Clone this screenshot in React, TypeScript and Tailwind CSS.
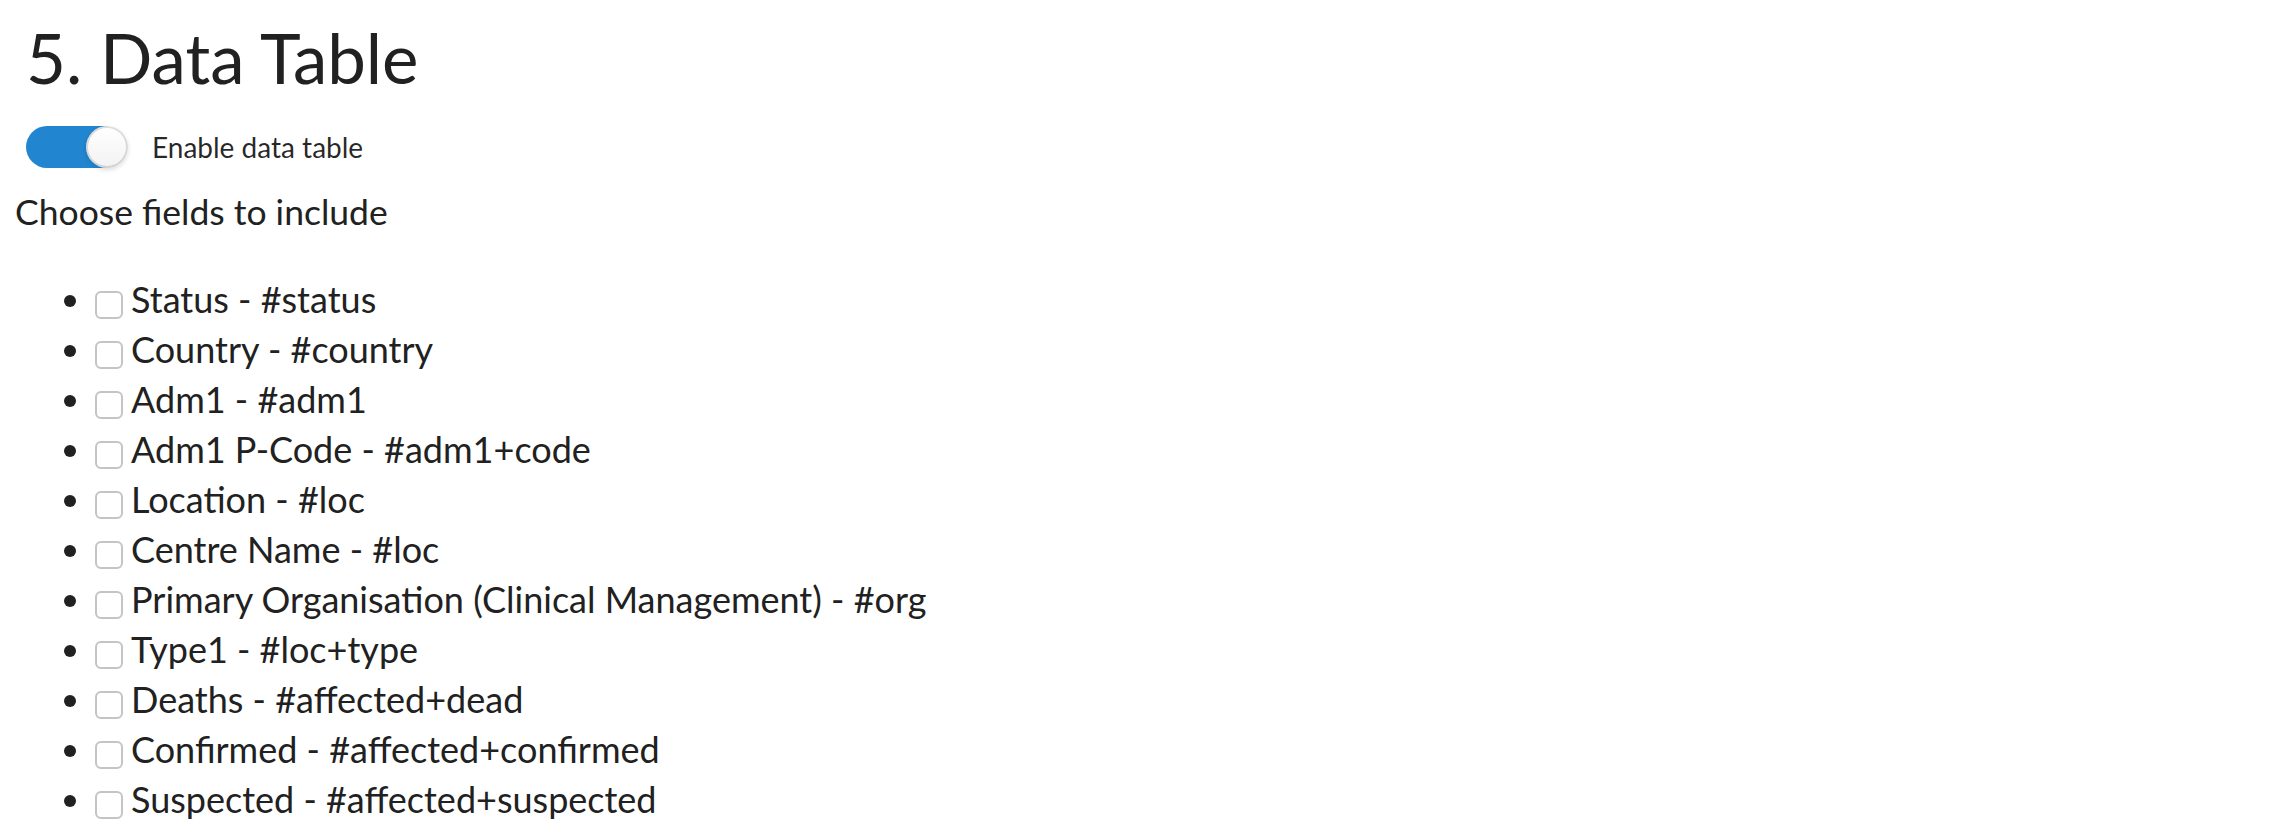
const fields = [
  'Status - #status',
  'Country - #country',
  'Adm1 - #adm1',
  'Adm1 P-Code - #adm1+code',
  'Location - #loc',
  'Centre Name - #loc',
  'Primary Organisation (Clinical Management) - #org',
  'Type1 - #loc+type',
  'Deaths - #affected+dead',
  'Confirmed - #affected+confirmed',
  'Suspected - #affected+suspected',
];

const Toggle = ({ label }: { label: string }) => {
  return (
    <div className="ml-[26px] mt-[26px] flex h-[42px] items-center">
      <div className="relative h-[42px] w-[98px] rounded-full bg-[#2185d0]">
        <span className="absolute top-0 left-[60px] h-[42px] w-[42px] rounded-full bg-white bg-gradient-to-b from-transparent to-black/5 shadow-[0_2px_4px_0_rgba(34,36,38,0.15),inset_0_0_0_2px_rgba(34,36,38,0.15)]" />
      </div>
      <span className="ml-[28px] text-[28px] leading-[42px] text-black/85">{label}</span>
    </div>
  );
};

const FieldItem = ({ title }: { title: string }) => {
  return (
    <li className="h-[50px] leading-[50px]">
      <span className="mr-[8px] inline-block h-[28px] w-[28px] rounded-[6px] border-2 border-[#c4c4c4] bg-white align-[-6px]" />
      {title}
    </li>
  );
};

export default function App() {
  return (
    <div className="min-h-screen bg-white font-['Lato','Liberation_Sans',sans-serif] text-[#212121]">
      <h1 className="pt-[17px] pl-[26px] text-[69px] leading-[1.2] font-normal">5. Data Table</h1>
      <Toggle label="Enable data table" />
      <p className="mt-[23px] pl-[15px] text-[35.5px] leading-[1.2]">Choose fields to include</p>
      <ul className="mt-[41px] list-disc pl-[95px] text-[36px]">
        {fields.map((field, index) => (
          <FieldItem key={`${field}_${index}`} title={field} />
        ))}
      </ul>
    </div>
  );
}
